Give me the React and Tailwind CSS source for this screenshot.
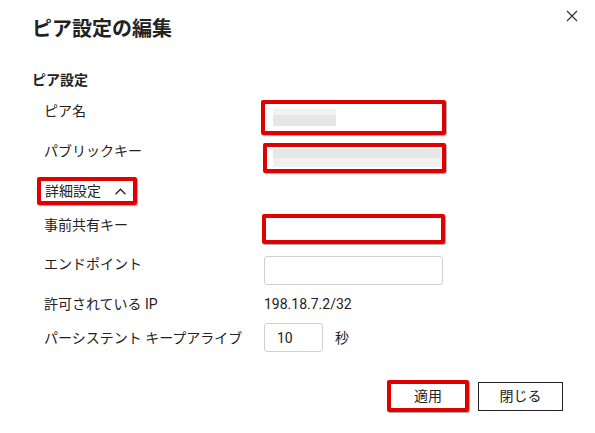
import React from "react"

const font = { fontFamily: "Roboto, 'Noto Sans CJK JP', sans-serif" }

function Label({ children, className = "" }) {
  return (
    <div className={`w-[232px] shrink-0 pl-3 text-[14px] leading-5 text-[#222] ${className}`}>
      {children}
    </div>
  )
}

export default function App() {
  return (
    <div className="relative w-[595px] h-[433px] bg-white overflow-hidden" style={font}>
      <button className="absolute right-[16px] top-[9px] w-[14px] h-[14px] text-[#333]" aria-label="閉じる">
        <svg viewBox="0 0 14 14" width="14" height="14">
          <path d="M2 2 L12 12 M12 2 L2 12" stroke="currentColor" strokeWidth="1.2" fill="none" />
        </svg>
      </button>

      <div className="pl-8 pt-[15px]">
        <h1 className="text-[20px] leading-7 font-bold text-[#222]">ピア設定の編集</h1>
        <h2 className="mt-[27px] text-[14px] leading-5 font-bold text-[#222]">ピア設定</h2>

        {/* ピア名 */}
        <div className="mt-[10px] flex items-start h-[35px]">
          <Label className="pt-[1px]">ピア名</Label>
          <div className="-ml-[3px] w-[185px] h-[35px] border-4 border-[#e10000] rounded-[2px] shadow-[1px_1px_1px_rgba(0,0,0,0.35)] flex items-center pl-2">
            <div className="w-[63px] h-[17px] flex flex-col">
              <div className="h-[6px] bg-[#f2f2f2]" />
              <div className="flex-1 bg-[#e6e6e6]" />
            </div>
          </div>
        </div>

        {/* パブリックキー */}
        <div className="mt-[8px] flex items-start h-[30px]">
          <Label className="-mt-[2px]">パブリックキー</Label>
          <div className="-ml-[1px] w-[183px] h-[30px] border-4 border-[#e10000] rounded-[2px] shadow-[1px_1px_1px_rgba(0,0,0,0.35)] flex items-center pl-[6px] pr-[1px]">
            <div className="flex-1 h-[18px] flex flex-col">
              <div className="h-[9px] bg-[#e7e7e7]" />
              <div className="flex-1 bg-[#f0f1f1]" />
            </div>
          </div>
        </div>

        {/* 詳細設定 */}
        <div className="mt-[4px] ml-[5px] w-[100px] h-[28px] border-4 border-[#e10000] rounded-[2px] shadow-[1px_1px_1px_rgba(0,0,0,0.35)] flex items-center pl-1 gap-[13px] text-[14px] leading-5 text-[#222]">
          <span>詳細設定</span>
          <svg viewBox="0 0 14 10" width="13" height="9">
            <path d="M1.5 8 L7 2.5 L12.5 8" stroke="#222" strokeWidth="1.4" fill="none" />
          </svg>
        </div>

        {/* 事前共有キー */}
        <div className="mt-[9px] flex items-start h-[30px]">
          <Label className="pt-[1px]">事前共有キー</Label>
          <div className="-ml-[2px] w-[183px] h-[30px] border-4 border-[#e10000] rounded-[2px] shadow-[1px_1px_1px_rgba(0,0,0,0.35)]" />
        </div>

        {/* エンドポイント */}
        <div className="mt-[12px] flex items-start h-[29px]">
          <Label className="-mt-[2px]">エンドポイント</Label>
          <input className="w-[179px] h-[29px] border border-[#d0d0d0] rounded-[3px] outline-none" />
        </div>

        {/* 許可されている IP */}
        <div className="mt-[9px] flex items-center h-[20px] text-[14px] leading-5 text-[#222]">
          <Label>許可されている IP</Label>
          <span>198.18.7.2/32</span>
        </div>

        {/* パーシステント キープアライブ */}
        <div className="mt-[9px] flex items-center h-[29px]">
          <Label>パーシステント キープアライブ</Label>
          <input
            defaultValue="10"
            className="w-[59px] h-[29px] border border-[#d0d0d0] rounded-[3px] outline-none pl-3 text-[14px] text-[#222]"
            style={font}
          />
          <span className="ml-3 text-[14px] leading-5 text-[#222]">秒</span>
        </div>
      </div>

      <div className="absolute left-0 right-0 top-[380px] flex justify-end pr-[32px] gap-[9px]">
        <button className="w-[82px] h-[32px] border-4 border-[#e10000] rounded-[2px] shadow-[1px_1px_1px_rgba(0,0,0,0.35)] text-[14px] text-[#222] flex items-center justify-center">
          適用
        </button>
        <button className="mt-[2px] w-[85px] h-[29px] border border-[#222] text-[14px] text-[#222] flex items-center justify-center">
          閉じる
        </button>
      </div>
    </div>
  )
}
